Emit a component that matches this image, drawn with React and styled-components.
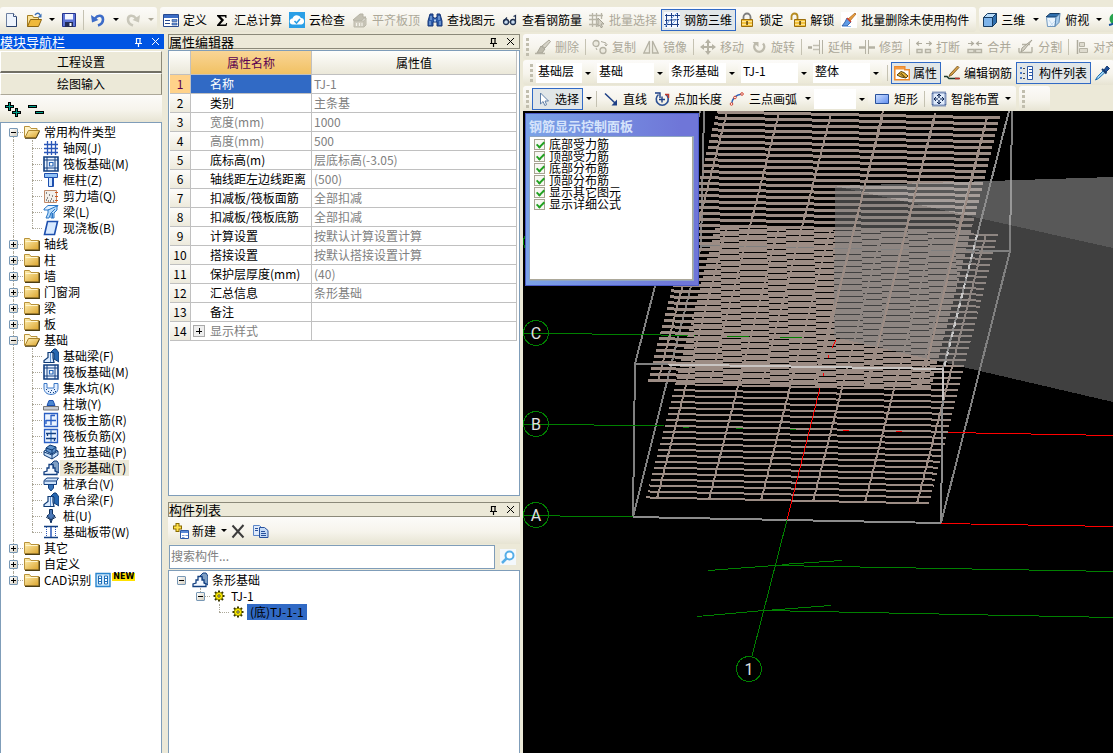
import { useState } from "react";
import styled, { createGlobalStyle, css } from "styled-components";

const GlobalStyle = createGlobalStyle`
  * {
    box-sizing: border-box;
  }
  body {
    margin: 0;
    background: #ece9d8;
  }
  body, button, input, select, table {
    font-family: "Noto Sans CJK SC", "Liberation Sans", sans-serif;
    font-size: 12px;
    line-height: 16px;
    color: #000;
  }
  button {
    margin: 0;
    padding: 0;
    border: 0;
    background: none;
    white-space: nowrap;
  }
`;

const barFill = "linear-gradient(#fcfbf9 0%, #f6f4ec 55%, #e7e4d3 100%)";

const Page = styled.div`
  display: flex;
  flex-direction: column;
  height: 100vh;
  padding-top: 7px;
  overflow: hidden;
`;

const Workspace = styled.main`
  display: flex;
  flex: 1;
  min-height: 0;
  padding-top: 2px;
`;

const Defs = styled.svg`
  position: absolute;
`;

/* ---------- toolbars ---------- */

const BarRow = styled.div`
  display: flex;
  gap: 3px;
  flex: none;
  height: 25px;
  overflow: hidden;
`;

const Bar = styled.div`
  display: flex;
  align-items: center;
  flex: ${({ $fill }) => ($fill ? "1 0 auto" : "none")};
  padding-left: ${({ $start = 4 }) => $start}px;
  padding-right: ${({ $end = 0 }) => $end}px;
  border-radius: 3px;
  background: ${barFill};
`;

const ToolButton = styled.button`
  display: flex;
  align-items: center;
  flex: none;
  gap: ${({ $gap = 4 }) => $gap}px;
  height: 22px;
  padding: 0 3px 0 2px;
  border: 1px solid transparent;
  ${({ $active }) =>
    $active &&
    css`
      border-color: #316ac5;
      background: #e1e6e8;
    `}
  &:disabled {
    color: #aca899;
  }
`;

const ArrowButton = styled.button`
  flex: none;
  width: ${({ $w = 11 }) => $w}px;
  height: 22px;
  &::before {
    content: "";
    display: block;
    width: 0;
    margin: 0 auto;
    border: 3px solid transparent;
    border-top-color: ${({ disabled }) => (disabled ? "#aca899" : "#000")};
    border-bottom: 0;
  }
`;

const Separator = styled.span`
  flex: none;
  width: 1px;
  height: ${({ $h = 16 }) => $h}px;
  margin: 0 3px 0 2px;
  background: #c5c2b2;
`;

const Grip = styled.span`
  flex: none;
  width: 3px;
  height: 18px;
  margin-right: 3px;
  background: repeating-linear-gradient(#c1beae 0 3px, transparent 3px 5px);
`;

const Combo = styled.label`
  display: flex;
  position: relative;
  flex: none;
  width: ${({ $w = 69 }) => $w}px;
  height: 20px;
  margin-right: 3px;
  background: #fff;
  &::after {
    content: "";
    position: absolute;
    right: 3px;
    top: 9px;
    border: 3px solid transparent;
    border-top-color: #000;
    border-bottom: 0;
    pointer-events: none;
  }
  select {
    appearance: none;
    width: 100%;
    padding: 0 12px 3px 2px;
    border: 0;
    border-radius: 0;
    background: linear-gradient(#fbfaf6, #ece9d8) right / 12px 100% no-repeat;
  }
`;

/* ---------- docked panels ---------- */

const NavColumn = styled.aside`
  display: flex;
  flex-direction: column;
  flex: none;
  width: 164px;
  margin-right: 4px;
`;

const DockColumn = styled.section`
  display: flex;
  flex-direction: column;
  gap: 6px;
  flex: none;
  width: 352px;
  margin-right: 3px;
`;

const ViewColumn = styled.section`
  display: flex;
  flex-direction: column;
  flex: 1;
  min-width: 0;
`;

const BarStack = styled.div`
  display: flex;
  flex-direction: column;
  gap: 1px;
  flex: none;
`;

const DockPanel = styled.div`
  display: flex;
  flex-direction: column;
  flex: ${({ $grow }) => $grow} 1 0;
  min-height: 0;
`;

const PanelTitle = styled.header`
  display: flex;
  align-items: center;
  flex: none;
  height: 15px;
  padding-right: 4px;
  font-size: 13px;
  line-height: 13px;
  border: ${({ $blue }) => ($blue ? "0" : "1px solid #8b8979")};
  color: ${({ $blue }) => ($blue ? "#fff" : "#000")};
  background: ${({ $blue }) => ($blue ? "#0054e3" : "#ece9d8")};
  span {
    flex: 1;
  }
  button {
    display: flex;
    margin-left: 8px;
    color: inherit;
  }
`;

const NavButtons = styled.div`
  display: flex;
  flex-direction: column;
  flex: none;
  width: 162px;
  padding-top: 2px;
`;

const NavButton = styled.button`
  height: 22px;
  border: 1px solid #fff;
  border-right-color: #8b8979;
  border-bottom: ${({ $raised }) => ($raised ? "2px solid #716f64" : "1px solid #aca899")};
  background: #ece9d8;
`;

const NavTools = styled.div`
  display: flex;
  align-items: center;
  gap: 7px;
  flex: none;
  width: 162px;
  height: 27px;
  padding-left: 5px;
  background: ${barFill};
`;

const TreeBox = styled.div`
  flex: 1;
  min-height: 0;
  width: ${({ $w = "100%" }) => $w};
  padding: 1px 0 0 3px;
  border: 1px solid #7f9db9;
  border-bottom: 0;
  background: #fff;
  overflow: hidden;
`;

const TreeRow = styled.div`
  display: flex;
  align-items: center;
  height: 16px;
  white-space: nowrap;
  > svg {
    margin: 0 1px;
  }
`;

const Cell = styled.span`
  display: flex;
  align-items: center;
  justify-content: center;
  position: relative;
  flex: none;
  width: 19px;
  height: 16px;
  &::before {
    content: "";
    position: absolute;
    left: 9px;
    top: ${({ $line }) => ($line === "first" ? "8px" : "0")};
    bottom: ${({ $line }) => ($line === "last" ? "8px" : "0")};
    border-left: ${({ $line }) => ($line === "none" ? "0" : "1px dotted #aca899")};
  }
  &::after {
    content: "";
    position: absolute;
    left: 9px;
    right: 0;
    top: 8px;
    border-top: ${({ $stub }) => ($stub ? "1px dotted #aca899" : "0")};
  }
`;

const Expander = styled.button`
  position: relative;
  z-index: 1;
  width: 9px;
  height: 9px;
  border: 1px solid #7898b5;
  border-radius: 1px;
  background:
    linear-gradient(#000, #000) center / 5px 1px no-repeat,
    ${({ $open }) => ($open ? "" : "linear-gradient(#000, #000) center / 1px 5px no-repeat,")}
    linear-gradient(135deg, #fff, #d5cfc0);
`;

const TreeText = styled.span`
  padding: 0 3px;
  color: #000;
  background: ${({ $mark }) => ({ soft: "#ece9d8", strong: "#316ac5" })[$mark] || "none"};
`;

const NewTag = styled.b`
  padding: 0 1px;
  margin-bottom: 6px;
  font-family: "DejaVu Sans", sans-serif;
  font-size: 8px;
  line-height: 8px;
  background: #ffe100;
`;

/* ---------- property editor ---------- */

const TableBox = styled.div`
  flex: 1;
  min-height: 0;
  margin-top: 1px;
  padding: 0 2px 0 1px;
  border: 1px solid #7f9db9;
  background: #fff;
  overflow: hidden;
`;

const PropertyTable = styled.table`
  width: 100%;
  table-layout: fixed;
  border-spacing: 0;
  th, td {
    height: 19px;
    padding: 0;
    border-right: 1px solid #c0c0c0;
    border-bottom: 1px solid #c0c0c0;
    font-weight: normal;
    line-height: 16px;
    white-space: nowrap;
    overflow: hidden;
  }
  thead th {
    height: 24px;
    background: linear-gradient(#fefefc, #ebe8d9);
  }
  thead th:first-child {
    width: 21px;
  }
  thead th:nth-child(2) {
    width: 121px;
    color: #5b0050;
    background: linear-gradient(#f9d596, #f1c163);
  }
  tbody th {
    background: linear-gradient(#fdfcfa, #edeadc);
  }
  td:last-child {
    padding-left: 2px;
    color: #808080;
  }
`;

const PropRow = styled.tr`
  td:nth-child(2) {
    color: ${({ $dim }) => ($dim ? "#808080" : "#000")};
  }
  ${({ $current }) =>
    $current &&
    css`
      && th {
        color: #5b0050;
        background: #ffd28a;
      }
      && td:nth-child(2) {
        color: #fff;
        background: #316ac5;
      }
    `}
`;

const NameCell = styled.div`
  display: flex;
  align-items: center;
  height: 18px;
  padding-left: ${({ $plus }) => ($plus ? 2 : 19)}px;
  gap: 5px;
`;

const PlusBox = styled.button`
  width: 12px;
  height: 12px;
  border: 1px solid #aaa;
  background:
    linear-gradient(#000, #000) center / 6px 1px no-repeat,
    linear-gradient(#000, #000) center / 1px 6px no-repeat,
    #eee;
`;

/* ---------- component list ---------- */

const ListTools = styled.div`
  display: flex;
  align-items: center;
  flex: none;
  height: 27px;
  padding-left: 2px;
  background: ${barFill};
`;

const SearchRow = styled.div`
  display: flex;
  flex: none;
  height: 26px;
  padding: 1px 0 1px 1px;
  input {
    flex: 1;
    min-width: 0;
    padding: 0 0 3px 1px;
    border: 1px solid #7f9db9;
    background: #fff;
  }
  input::placeholder {
    color: #808080;
  }
  button {
    display: flex;
    align-items: center;
    justify-content: center;
    width: 25px;
  }
`;

/* ---------- 3d view ---------- */

const Viewport = styled.div`
  position: relative;
  flex: 1;
  min-height: 0;
  background: #000;
  overflow: hidden;
`;

const Scene = styled.svg`
  display: block;
  width: 100%;
  height: 100%;
`;

const FloatPanel = styled.div`
  position: absolute;
  left: 2px;
  top: 2px;
  display: flex;
  flex-direction: column;
  width: 174px;
  height: 173px;
  padding: 2px 4px 4px 3px;
  border: 1px solid #4c5cc8;
  background: linear-gradient(90deg, #7ba3e7, #6f76d8 90%);
  h2 {
    margin: 0;
    height: 20px;
    font-size: 13px;
    line-height: 20px;
    color: #d5e3fb;
  }
`;

const CheckList = styled.div`
  flex: 1;
  padding: 1px 4px;
  border: 1px solid #8fa6c0;
  box-shadow: inset -1px -1px #aca899;
  background: #fff;
`;

const CheckLine = styled.label`
  display: flex;
  align-items: center;
  gap: 4px;
  height: 12px;
  line-height: 12px;
  input {
    appearance: none;
    width: 11px;
    height: 11px;
    margin: 0;
    border: 1px solid #a7a392;
    background: #f7f7f2;
  }
  input:checked::before {
    content: "";
    display: block;
    width: 3px;
    height: 6px;
    margin: 0 0 0 3px;
    border: solid #21a121;
    border-width: 0 2px 2px 0;
    transform: rotate(45deg);
  }
`;

const Glyph = styled.svg`
  display: block;
  flex: none;
`;

/* ---------- icons, all on a 16px grid ---------- */

const icons = {
  page: (
    <>
      <path d="M3.500 1.500h7l3 3v10h-10z" fill="#eef4fd" stroke="#6c7fa0" />
      <path d="M10.500 1.500v3h3" fill="#fff" stroke="#3f5680" />
      <path d="M13.500 5v9.500h-10" fill="none" stroke="#27406e" />
    </>
  ),
  open: (
    <>
      <path d="M1.500 14.500v-11h5l1 2h5v3" fill="#fbe39a" stroke="#a57e22" />
      <path d="M1.500 14.500l3-7h11l-3 7z" fill="#f0b93a" stroke="#8c6510" />
      <path d="M9 3c2-2.500 4-2 5 0" fill="none" stroke="#3a6fb5" strokeWidth="1.500" />
      <path d="M15.500 1.500v4h-4z" fill="#3a6fb5" />
    </>
  ),
  save: (
    <>
      <path d="M1.500 1.500h13v13h-13z" fill="#5d74d6" stroke="#26368e" />
      <path d="M4 2h8v5.500H4z" fill="#f3f6ff" />
      <path d="M4 10h8v5H4z" fill="#222c56" />
      <path d="M8.500 11h2v3h-2z" fill="#fff" />
    </>
  ),
  undo: (
    <>
      <path d="M5 6.500C8 2.500 13 3 13 7.500c0 3-2 5-5 6" fill="none" stroke="#3d6cc8" strokeWidth="2.600" />
      <path d="M1 3l1 7.500L8.500 8z" fill="#3d6cc8" />
    </>
  ),
  redo: (
    <>
      <path d="M11 6.500C8 2.500 3 3 3 7.500c0 3 2 5 5 6" fill="none" stroke="#c9c7ba" strokeWidth="2.600" />
      <path d="M15 3l-1 7.500L7.500 8z" fill="#c9c7ba" />
    </>
  ),
  form: (
    <>
      <path d="M.5 2.500h15v12H.5z" fill="#fff" stroke="#27498f" />
      <path d="M1 3h14v3H1z" fill="#3b6cc4" />
      <path d="M2 8.500h5M2 11.500h5" stroke="#27498f" />
      <path d="M9 7.500h5v2H9zM9 11h5v2H9z" fill="#6b95d8" stroke="#27498f" strokeWidth=".6" />
    </>
  ),
  sigma: (
    <path d="M3 3h9.500v3h-1L11 4.500H6.500l3.600 3.600-4 4.400H11.500l.8-1.500h.9L12.500 14H3v-1l4-4.700L3 4z" fill="#000" />
  ),
  cloud: (
    <>
      <path d="M0 0h16v16H0z" fill="#2b9fe6" />
      <path d="M4 12.500a3 3 0 01-.5-6 4.500 4.500 0 018.500-.5 3.300 3.300 0 01.5 6.500z" fill="#fff" />
      <path d="M5.500 9l2 2 3.500-4" fill="none" stroke="#2b9fe6" strokeWidth="1.600" />
    </>
  ),
  level: (
    <>
      <path d="M1 8l7-6h3v3h3L9 9H3z" fill="#c3c0b2" stroke="#b5b2a4" />
      <path d="M2 9h10v6H2zM12 9l2-3v7l-2 2" fill="#d0cdc0" stroke="#bbb8aa" />
      <path d="M4.500 11v3M7.500 11v3M10 11v3" stroke="#f4f2ea" />
    </>
  ),
  binoculars: (
    <>
      <path d="M3 2h3v3l1 1h2l1-1V2h3l2 7v5h-5v-4H6v4H1V9z" fill="#2c5aa8" stroke="#173676" />
      <path d="M4 4v4M3 9v4M12 4v4M13 9v4" stroke="#9fc4ef" />
      <path d="M7 7.500h2v2H7z" fill="#b9d1f0" />
    </>
  ),
  glasses: (
    <>
      <circle cx="4" cy="10" r="2.500" fill="#c8dcf0" stroke="#1f3050" strokeWidth="1.300" />
      <circle cx="11" cy="10" r="2.500" fill="#c8dcf0" stroke="#1f3050" strokeWidth="1.300" />
      <path d="M6.500 10h2M1.500 9.500L5 5.500M13.500 10V3.500l-2 1" fill="none" stroke="#1f3050" strokeWidth="1.200" />
    </>
  ),
  gridPick: (
    <>
      <path d="M0 3.500h14M0 7.500h9M0 12.500h9M3.500 1v14M7.500 1v14M12.500 1v6" stroke="#b8b5a7" strokeWidth="1.300" />
      <path d="M9 6l6 6h-3l1.500 3-1.500.7L10.500 13 9 14.500z" fill="#d5d2c6" stroke="#a5a294" />
    </>
  ),
  rebar3d: (
    <>
      <path d="M0 0h16v16H0z" fill="#f4f8ff" />
      <path d="M2.500 2v13M7.500 1v14M13.500 1v14M0 12.500h15M1 8.500l14-1M1 3.500h15" stroke="#1d3f86" fill="none" />
      <path d="M1 15L5 9l8-8M8 12l6-6" stroke="#77a5e6" fill="none" />
    </>
  ),
  lock: (
    <>
      <path d="M4.500 7V5a3.500 3.500 0 017 0v2" fill="none" stroke="#7d7d7d" strokeWidth="1.800" />
      <path d="M2.500 7.500h11v7h-11z" fill="#f2c23c" stroke="#9b6e0c" />
      <path d="M3 9.500h10M3 12.500h10" stroke="#fbe39a" />
      <path d="M7.300 9h1.500v4H7.300z" fill="#5b4108" />
    </>
  ),
  unlock: (
    <>
      <path d="M1.500 8V4.500a3 3 0 016 0V7" fill="none" stroke="#b58b20" strokeWidth="1.800" />
      <path d="M4.500 7.500h11v7h-11z" fill="#f2c23c" stroke="#9b6e0c" />
      <path d="M5 9.500h10M5 12.500h10" stroke="#fbe39a" />
      <path d="M9.300 9h1.500v4H9.300z" fill="#5b4108" />
    </>
  ),
  brush: (
    <>
      <path d="M0 0h16v16H0z" fill="#fff" />
      <path d="M14 1l1 1-6 7-2-2z" fill="#e9a03c" stroke="#a35a14" strokeWidth=".7" />
      <path d="M6 6l4 4-4 4H1l3-4z" fill="#5f9ce6" stroke="#214f9c" strokeWidth=".8" />
      <path d="M6 6l4 4" stroke="#cf3c2e" strokeWidth="1.500" />
      <path d="M2 14.500h8" stroke="#93b9ea" />
    </>
  ),
  cube: (
    <>
      <path d="M1.500 5.500h9v9h-9z" fill="#7eb4ea" stroke="#173c63" />
      <path d="M1.500 5.500l4-4h9l-4 4z" fill="#b7dbf8" stroke="#173c63" />
      <path d="M10.500 5.500l4-4v9l-4 4z" fill="#2f6fae" stroke="#173c63" />
    </>
  ),
  topView: (
    <>
      <path d="M1 5l4-3.500h10L11 5z" fill="#2f6fae" stroke="#173c63" />
      <path d="M1.500 5.500h9.500l-1 9H2.500z" fill="#eaf4fd" stroke="#7299bf" />
      <path d="M11 5.500l4-4-1 9-4 4z" fill="#a9cdee" stroke="#5b86b0" />
      <path d="M4 8l4 6M5 14l5-5" stroke="#c4dcf2" />
    </>
  ),
  orbit: (
    <>
      <circle cx="8" cy="7" r="5.500" fill="#27a34d" />
      <path d="M2 13c5-1 9-5 11-10" fill="none" stroke="#134f9b" strokeWidth="2" />
    </>
  ),
  erase: (
    <>
      <path d="M14 1l1.500 1.500L10 9 7 7z" fill="#d6d3c7" stroke="#aaa799" />
      <path d="M6 7l4 3-3 4H2z" fill="#bebbad" stroke="#a5a294" />
      <path d="M0 14.500h10" stroke="#b5b2a4" strokeWidth="1.500" />
    </>
  ),
  copyItem: (
    <>
      <circle cx="4" cy="4.500" r="3" fill="#eceadf" stroke="#b5b2a4" strokeWidth="1.300" />
      <circle cx="11" cy="11.500" r="3" fill="#eceadf" stroke="#b5b2a4" strokeWidth="1.300" />
      <path d="M9 2.500l5 1.500v3M12.500 5.500L14 7l1.500-1.500M4 9l1 2" fill="none" stroke="#aeab9d" />
    </>
  ),
  mirror: <path d="M6.500 2v12H.8zM9.500 2v12h5.700z" fill="#eceadf" stroke="#b5b2a4" strokeWidth="1.300" />,
  move: (
    <>
      <path d="M8 2v12M2 8h12" stroke="#b5b2a4" strokeWidth="2" />
      <path d="M8 0l3 4H5zM8 16l3-4H5zM0 8l4-3v6zM16 8l-4-3v6z" fill="#b5b2a4" />
    </>
  ),
  rotate: (
    <>
      <path d="M12 4.500a5 5 0 11-7.500 0" fill="none" stroke="#bdbaac" strokeWidth="2.400" />
      <path d="M1.500 3h6v5z" fill="#bdbaac" />
    </>
  ),
  extend: (
    <>
      <path d="M11.500 1v14M14.500 1v14" stroke="#b5b2a4" />
      <path d="M0 8.500h4" stroke="#aeab9d" strokeWidth="2.500" />
      <path d="M5 6.500h6M5 10.500h6" stroke="#c3c0b3" strokeWidth="1.500" />
    </>
  ),
  trim: (
    <>
      <path d="M6.500 1v14M9.500 1v14" stroke="#b5b2a4" />
      <path d="M0 8.500h6M10 8.500h6" stroke="#b5b2a4" strokeWidth="2.500" />
    </>
  ),
  split: (
    <>
      <path d="M1 4.500h5M10 4.500h5M3 2.500l-2.500 2L3 6.500M13 2.500l2.500 2-2.500 2" fill="none" stroke="#aeab9d" strokeWidth="1.200" />
      <path d="M1 10.500h5v3H1zM9.500 10.500h5v3h-5z" fill="#eceadf" stroke="#b5b2a4" strokeWidth="1.400" />
    </>
  ),
  merge: (
    <>
      <path d="M1 4.500h5M10 4.500h5M4 2.500l2.500 2L4 6.500M12 2.500l-2.500 2 2.500 2" fill="none" stroke="#aeab9d" strokeWidth="1.200" />
      <path d="M1 10.500h6v3H1zM8.500 10.500h6v3h-6z" fill="#eceadf" stroke="#b5b2a4" strokeWidth="1.400" />
    </>
  ),
  divide: (
    <>
      <path d="M4 5.500h8M1 13.500h13M1 9v4.500M14 8v5.500" fill="none" stroke="#b5b2a4" strokeWidth="1.400" />
      <path d="M14 1l-8 10-3 2 1-4z" stroke="#a5a294" fill="#d6d3c7" />
    </>
  ),
  align: (
    <>
      <path d="M2.500 1v14" stroke="#aeab9d" strokeWidth="1.500" />
      <path d="M4.500 3.500h5v4h-5zM4.500 9.500h8v4h-8z" fill="#dedbcf" stroke="#b5b2a4" />
    </>
  ),
  attr: (
    <>
      <path d="M.8 1.800h10v3h4.500v10H.8z" fill="#fff" stroke="#ee8a2c" strokeWidth="1.500" />
      <path d="M1 2h9v2.500H1z" fill="#f39a43" />
      <path d="M3 10l4-3.500 3 1 4 3.500-2 2-5-1z" fill="#e6b437" stroke="#59430d" />
      <path d="M7 8l5 5M5 8l5 4" stroke="#59430d" strokeWidth=".8" />
    </>
  ),
  editBar: (
    <>
      <path d="M13.500 1l1.500 1.500L8 10l-3 1.500L6 9z" fill="#d9a24a" stroke="#6c4a14" strokeWidth=".8" />
      <path d="M0 11.500h3l2 2h10" fill="none" stroke="#1c3b2c" strokeWidth="1.600" />
      <path d="M11 13.500h5" stroke="#b8342c" strokeWidth="1.600" />
    </>
  ),
  listView: (
    <>
      <path d="M1 2h2v2H1zM1 7h2v2H1zM1 12h2v2H1z" fill="#4878c6" />
      <path d="M4 3.500h2M4 8.500h2M4 13.500h2" stroke="#4b4b4b" />
      <path d="M8.500 1.500h5v13h-5z" fill="#fff" stroke="#2c58a6" />
      <path d="M10 4.500h3M10 7.500h3M10 10.500h3" stroke="#2c58a6" />
    </>
  ),
  dropper: (
    <>
      <path d="M10 5L3.500 11.500 1.500 15l3-1.500L11.500 7" fill="#9fd3f2" stroke="#1f6fb0" />
      <path d="M8 4l4.500 4.500" stroke="#15396e" strokeWidth="2" />
      <path d="M10 5l3-4 2.500 2.500L12 7z" fill="#1d4f9a" stroke="#15396e" />
    </>
  ),
  pointer: <path d="M5.500 2v11l2.600-2.500 1.700 4 1.800-.8L10 10h3.500z" fill="#fff" stroke="#5f7fa8" />,
  line: (
    <>
      <path d="M2 2.500L12 12" stroke="#1d3f86" strokeWidth="1.500" />
      <path d="M14 14.500H8.500l5.500-6z" fill="#1d3f86" />
    </>
  ),
  length: (
    <>
      <path d="M4.500 3.500a6 6 0 107.500 0" fill="none" stroke="#2b5094" strokeWidth="1.600" />
      <path d="M1 2h5v5M8 5.500v6M5 8.500h6" fill="none" stroke="#1d3f86" strokeWidth="1.400" />
      <path d="M11 3.500h3.500V7" fill="none" stroke="#c2382c" strokeWidth="1.500" />
    </>
  ),
  arc: (
    <>
      <path d="M2.500 13.500C3 8 6 4 13 3" fill="none" stroke="#2b5fb4" strokeWidth="1.500" />
      <circle cx="2.500" cy="13" r="1.300" fill="#fff" stroke="#d3422e" />
      <circle cx="6" cy="6.500" r="1.300" fill="#fff" stroke="#d3422e" />
      <circle cx="13" cy="3" r="1.300" fill="#fff" stroke="#d3422e" />
    </>
  ),
  rect: <path d="M1.500 3.500h13v9h-13z" fill="url(#rectFill)" stroke="#27509c" />,
  smart: (
    <>
      <path d="M1.500 1.500h13v13h-13z" fill="#dfeafa" stroke="#1d3f86" strokeDasharray="1 1" strokeWidth="2" />
      <path d="M8 3v4M8 9v4M3 8h4M9 8h4" stroke="#0d2454" strokeWidth="1.200" />
      <path d="M6 5l2-2 2 2M6 11l2 2 2-2M5 6L3 8l2 2M11 6l2 2-2 2" fill="none" stroke="#0d2454" />
    </>
  ),
  folder: (
    <>
      <path d="M.5 13.500v-11h5l1.500 2h8v9z" fill="url(#folderFill)" stroke="#b8923a" />
      <path d="M1.500 5.500h12" stroke="#fff6cf" />
      <path d="M1 14.300h14.300V5" fill="none" stroke="#4b3d14" strokeWidth="1.300" />
    </>
  ),
  folderOpen: (
    <>
      <path d="M.5 13.500v-11h5l1.500 2h6v3" fill="#fff3c8" stroke="#b8923a" />
      <path d="M1 13.500l3.500-7h11l-3.500 7z" fill="url(#folderFill)" stroke="#a9822c" />
      <path d="M1 14.300h11l3.500-7" fill="none" stroke="#4b3d14" />
    </>
  ),
  axisGrid: <path d="M4.500 1v14M8.500 1v14M12.500 1v14M1 4.500h14M1 8.500h14M1 12.500h14" stroke="#2a57b8" strokeWidth="1.300" />,
  raft: (
    <>
      <path d="M1 1h14v14H1z" fill="#e9f3ff" stroke="#123f80" strokeWidth="1.600" />
      <path d="M4 1v14M12 1v14M1 4h14M1 12h14" stroke="#123f80" />
      <path d="M6.500 6.500h3.500v3.500h-3.500z" fill="#fff" stroke="#2a68b8" strokeWidth="1.200" />
    </>
  ),
  column: (
    <>
      <path d="M1.500 1.500h13v4h-13z" fill="#8fc0f5" stroke="#1d4fae" />
      <path d="M5.500 5.500h5v9h-5z" fill="#cfe6ff" stroke="#1d4fae" />
      <path d="M9.500 6v8" stroke="#1d4fae" />
    </>
  ),
  wall: (
    <>
      <path d="M1.500 2.500h12v12h-12z" fill="#f2efea" stroke="#c08a6a" />
      <path d="M3 5h1M6 7h1M4 10h1M8 11h1M5 13h1M9 8h1M3 12h1M7 13h1M10 13h1" stroke="#222" />
      <path d="M12 4.500h3M12 8.500h3M12 12.500h3" stroke="#d0591e" />
    </>
  ),
  beam: (
    <>
      <path d="M1 5l4-3.500h10L11 6H1z" fill="#e4f2ff" stroke="#2a77c6" />
      <path d="M5 6l9-4v4l-3 3v5H8V9L6 14H3l2-5z" fill="#b9dcfb" stroke="#2a77c6" />
      <path d="M8 9l4-4M9.500 14V9" stroke="#2a77c6" />
    </>
  ),
  slab: <path d="M4.500 1.500h10l-3 13h-10z" fill="#d7e9ff" stroke="#1d4fae" strokeWidth="1.600" />,
  stripBeam: (
    <>
      <path d="M7 5l4-4h2l3 4v9l-5-3V5z" fill="#2767b0" stroke="#0e3a74" />
      <path d="M1 14.500v-2l4-3V4.500h5V10l1 4.500z" fill="#dcecff" stroke="#0e3a74" strokeWidth="1.200" />
      <path d="M7.500 5v9" stroke="#5b8fd0" />
    </>
  ),
  pit: (
    <>
      <path d="M1 3.500h3V8h7V3.500h4V8c0 4-3 6.500-7 6.500S1 12 1 8z" fill="#e3efff" stroke="#3c78c6" />
      <path d="M3 9.500h1M5 11.500h1M8 10.500h1M11 9.500h1M7 12.500h1M10 12.500h1M12 11.500h1" stroke="#123f80" />
    </>
  ),
  pier: (
    <>
      <path d="M6 4.500h4l2 5H4z" fill="#4a86d0" stroke="#1d4fae" />
      <path d="M.5 10.500h15v3.500H.5z" fill="#c9ccd2" stroke="#777" />
    </>
  ),
  mainBar: (
    <path d="M1.500 1.500h13v13h-13zM8 3.500h4M8 3v10M3 8.500h10M3 8v4" fill="#eaf3ff" stroke="#2a5fc4" strokeWidth="1.300" />
  ),
  negBar: (
    <>
      <path d="M1.500 1.500h13v13h-13z" fill="#eaf3ff" stroke="#2a5fc4" strokeWidth="1.300" />
      <path d="M8 2v12" stroke="#7aa7dd" strokeWidth="2" />
      <path d="M3 5.500h10M3 10.500h10M4.500 5v3M11.500 10v3" stroke="#123f80" strokeWidth="1.300" />
    </>
  ),
  pad: (
    <>
      <path d="M1 7l6-3 8 3v4l-6 4-8-4z" fill="#c8e0f9" stroke="#0e3a74" />
      <path d="M3 4l4-3 6 2v4L9 10 3 7z" fill="#5d90c8" stroke="#0e3a74" />
      <path d="M3 4l6 2 4-3M9 6v4M1 8l8 3 6-4M9 11v4" fill="none" stroke="#0e3a74" />
    </>
  ),
  strip: (
    <>
      <path d="M7 5l4-4h3l2 3v9l-5-3-1-5z" fill="#7f9fc4" stroke="#123f80" />
      <path d="M1 14.500v-2.500l3-1V8h2V4.500h4V8h2v3l2 1v2.500z" fill="#f3f8ff" stroke="#123f80" strokeWidth="1.300" />
    </>
  ),
  pileCap: (
    <>
      <path d="M1 4.500L4 2h11.500L13.500 5v3.500H1z" fill="#cfe3fa" stroke="#123f80" />
      <path d="M1.500 5h12M5.500 8.500h5V12L8 15l-2.500-3z" fill="#3572b8" stroke="#123f80" />
    </>
  ),
  pile: (
    <>
      <path d="M6.500 1.500h3V6l2.500 2-3 2.500V12L8 15l-1-3v-1.500L4 8l2.500-2z" fill="#4a78b8" stroke="#0e2f5e" />
      <path d="M3 9l5 3 5-3" fill="none" stroke="#0e2f5e" />
    </>
  ),
  band: (
    <>
      <path d="M1 2.500h14M1 13.500h14" stroke="#123f80" strokeWidth="1.600" />
      <path d="M3.500 3v10M12.500 3v10" stroke="#2a57b8" strokeDasharray="1 1" />
      <path d="M8 3v10" stroke="#2a57b8" strokeWidth="1.500" />
    </>
  ),
  cad: (
    <>
      <path d="M1 1.500h14v13H1z" fill="#cfe8fb" stroke="#2a86cf" strokeWidth="1.400" />
      <path d="M3.500 4h3v8h-3zM9.500 4h3v8h-3z" fill="#fff" stroke="#1f6fb8" />
      <path d="M3.500 6.500h3M9.500 6.500h3M3.500 9.500h3M9.500 9.500h3" stroke="#1f6fb8" />
    </>
  ),
  gear: (
    <>
      <path d="M8 2.500v11M2.500 8h11M4 4l8 8M12 4l-8 8" stroke="#3b3800" strokeWidth="2" />
      <circle cx="8" cy="8" r="3.700" fill="#ffee00" stroke="#8a8200" />
      <circle cx="8" cy="8" r="1.200" fill="#fff" stroke="#4e4a00" />
    </>
  ),
  addItem: (
    <>
      <path d="M4.500 0v9M0 4.500h9" stroke="#8a6b00" strokeWidth="4" />
      <path d="M4.500 1v7M1 4.500h7" stroke="#ffe14a" strokeWidth="2" />
      <path d="M7.500 7.500h8v8h-8z" fill="#fff" stroke="#2c58a6" />
      <path d="M8 8h7v2H8z" fill="#5a8ad6" />
      <path d="M9 12.500h2.500M12.500 12.500H15M9 14.500h2.500" stroke="#7a9fd8" />
    </>
  ),
  remove: <path d="M2.500 2.500l11 12M13.500 2L2.500 14.500" stroke="#3c3c3c" strokeWidth="2" />,
  duplicate: (
    <>
      <path d="M.5 2.500h6l3 3v7h-9z" fill="#dfeafa" stroke="#5c86c8" />
      <path d="M6.500 4.500h5l3.500 3v7H6.500z" fill="#c5dbf7" stroke="#27509c" />
      <path d="M8 8.500h4M8 10.500h5M8 12.500h5M2 5.500h3M2 7.500h3" stroke="#27509c" />
    </>
  ),
  search: (
    <>
      <path d="M0 0h16v16H0z" fill="#f4f8fc" />
      <circle cx="9.500" cy="6.500" r="4" fill="#fff" stroke="#56aee8" strokeWidth="2" />
      <path d="M6.500 9.500L2 14" stroke="#56aee8" strokeWidth="2.500" />
    </>
  ),
};

const Icon = ({ name }) => (
  <Glyph width="16" height="16" viewBox="0 0 16 16" aria-hidden="true">
    {icons[name]}
  </Glyph>
);

const Pin = () => (
  <Glyph width="9" height="10" viewBox="0 0 9 10" aria-hidden="true">
    <path d="M2.500 1v5M1 6.500h7M6 1v5M4.500 7v3M2 1.500h5" stroke="currentColor" strokeWidth="1.200" />
  </Glyph>
);

const Cross = () => (
  <Glyph width="9" height="9" viewBox="0 0 9 9" aria-hidden="true">
    <path d="M1 1l7 7M8 1L1 8" stroke="currentColor" />
  </Glyph>
);

/* ---------- small pieces ---------- */

const Tool = ({ icon, label, text, ...rest }) => (
  <ToolButton type="button" aria-label={label} {...rest}>
    <Icon name={icon} />
    {text}
  </ToolButton>
);

const Arrow = ({ label, w, disabled }) => (
  <ArrowButton type="button" aria-label={label} $w={w} disabled={disabled} />
);

const Picker = ({ label, value, w }) => (
  <Combo $w={w}>
    <select aria-label={label} defaultValue={value}>
      <option>{value}</option>
    </select>
  </Combo>
);

const Title = ({ text, blue }) => (
  <PanelTitle $blue={blue}>
    <span>{text}</span>
    <button type="button" aria-label="固定">
      <Pin />
    </button>
    <button type="button" aria-label="关闭">
      <Cross />
    </button>
  </PanelTitle>
);

const navTree = [
  {
    text: "常用构件类型",
    children: [
      ["axisGrid", "轴网(J)"],
      ["raft", "筏板基础(M)"],
      ["column", "框柱(Z)"],
      ["wall", "剪力墙(Q)"],
      ["beam", "梁(L)"],
      ["slab", "现浇板(B)"],
    ],
  },
  { text: "轴线" },
  { text: "柱" },
  { text: "墙" },
  { text: "门窗洞" },
  { text: "梁" },
  { text: "板" },
  {
    text: "基础",
    children: [
      ["stripBeam", "基础梁(F)"],
      ["raft", "筏板基础(M)"],
      ["pit", "集水坑(K)"],
      ["pier", "柱墩(Y)"],
      ["mainBar", "筏板主筋(R)"],
      ["negBar", "筏板负筋(X)"],
      ["pad", "独立基础(P)"],
      ["strip", "条形基础(T)"],
      ["pileCap", "桩承台(V)"],
      ["stripBeam", "承台梁(F)"],
      ["pile", "桩(U)"],
      ["band", "基础板带(W)"],
    ],
  },
  { text: "其它" },
  { text: "自定义" },
  { text: "CAD识别", isNew: true },
];

const properties = [
  ["名称", "TJ-1"],
  ["类别", "主条基"],
  ["宽度(mm)", "1000", true],
  ["高度(mm)", "500", true],
  ["底标高(m)", "层底标高(-3.05)"],
  ["轴线距左边线距离", "(500)"],
  ["扣减板/筏板面筋", "全部扣减"],
  ["扣减板/筏板底筋", "全部扣减"],
  ["计算设置", "按默认计算设置计算"],
  ["搭接设置", "按默认搭接设置计算"],
  ["保护层厚度(mm)", "(40)"],
  ["汇总信息", "条形基础"],
  ["备注", ""],
  ["显示样式", "", true],
];

const rebarLayers = ["底部受力筋", "顶部受力筋", "底部分布筋", "顶部分布筋", "显示其它图元", "显示详细公式"];

const NavTree = () => (
  <TreeBox $w="162px">
    {navTree.map((group, i) => {
      const last = i === navTree.length - 1;
      return (
        <div key={group.text}>
          <TreeRow>
            <Cell $stub $line={i === 0 ? "first" : last ? "last" : "full"}>
              <Expander type="button" $open={!!group.children} aria-label={group.text} />
            </Cell>
            <Icon name={group.children ? "folderOpen" : "folder"} />
            <TreeText>{group.text}</TreeText>
            {group.isNew && <Icon name="cad" />}
            {group.isNew && <NewTag>NEW</NewTag>}
          </TreeRow>
          {group.children?.map(([icon, text], n) => (
            <TreeRow key={text}>
              <Cell $line="full" />
              <Cell $stub $line={n === group.children.length - 1 ? "last" : "full"} />
              <Icon name={icon} />
              <TreeText $mark={text === "条形基础(T)" ? "soft" : undefined}>{text}</TreeText>
            </TreeRow>
          ))}
        </div>
      );
    })}
  </TreeBox>
);

const PropertyEditor = () => (
  <DockPanel $grow={462}>
    <Title text="属性编辑器" />
    <TableBox>
      <PropertyTable>
        <thead>
          <tr>
            <th />
            <th>属性名称</th>
            <th>属性值</th>
          </tr>
        </thead>
        <tbody>
          {properties.map(([name, value, dim], i) => (
            <PropRow key={name} $dim={dim} $current={i === 0}>
              <th>{i + 1}</th>
              <td>
                <NameCell $plus={name === "显示样式"}>
                  {name === "显示样式" && <PlusBox type="button" aria-label="展开" />}
                  {name}
                </NameCell>
              </td>
              <td>{value}</td>
            </PropRow>
          ))}
        </tbody>
      </PropertyTable>
    </TableBox>
  </DockPanel>
);

const ComponentList = () => (
  <DockPanel $grow={251}>
    <Title text="构件列表" />
    <ListTools>
      <Tool icon="addItem" text="新建" $gap={3} />
      <Arrow label="新建选项" w={7} />
      <Tool icon="remove" label="删除构件" />
      <Tool icon="duplicate" label="复制构件" />
    </ListTools>
    <SearchRow>
      <input type="text" aria-label="搜索构件" placeholder="搜索构件..." />
      <button type="button" aria-label="搜索">
        <Icon name="search" />
      </button>
    </SearchRow>
    <TreeBox>
      <TreeRow>
        <Cell $line="none">
          <Expander type="button" $open aria-label="条形基础" />
        </Cell>
        <Icon name="strip" />
        <TreeText>条形基础</TreeText>
      </TreeRow>
      <TreeRow>
        <Cell $line="none" />
        <Cell $line="last" $stub>
          <Expander type="button" $open aria-label="TJ-1" />
        </Cell>
        <Icon name="gear" />
        <TreeText>TJ-1</TreeText>
      </TreeRow>
      <TreeRow>
        <Cell $line="none" />
        <Cell $line="none" />
        <Cell $line="last" $stub />
        <Icon name="gear" />
        <TreeText $mark="strong">(底)TJ-1-1</TreeText>
      </TreeRow>
    </TreeBox>
  </DockPanel>
);

/* ---------- scene ---------- */

const barColor = "#9c8c84";
const lean = 0.256;
const pitch = 5.965;

// one layer of rebar: close cross bars plus six long bars, leaning with the view
const Mesh = ({ x, y, rows, thick, first }) => {
  const depth = (rows - 1) * pitch;
  return (
    <g stroke={barColor}>
      {Array.from({ length: rows }, (_, k) => {
        const left = x - lean * pitch * k;
        const top = y + pitch * k;
        return <line key={k} x1={left} y1={top} x2={left + 283} y2={top + 6} strokeWidth={thick} />;
      })}
      {Array.from({ length: 6 }, (_, k) => {
        const left = x + first + 52 * k;
        return <line key={k} x1={left} y1={y + k} x2={left - lean * depth} y2={y + k + depth} strokeWidth="2" />;
      })}
    </g>
  );
};

const axes = [
  { label: "D", x: 536, y: 242 },
  { label: "C", x: 536, y: 333 },
  { label: "B", x: 536, y: 424 },
  { label: "A", x: 536, y: 515 },
  { label: "1", x: 749, y: 669 },
];

const RebarScene = () => (
  <Scene role="img" aria-label="钢筋三维">
    <g transform="translate(-523 -111)" shapeRendering="crispEdges" fill="none">
      <g stroke="#808080" strokeWidth="2">
        <path d="M704 111L701 246L1010 251L1012 111" />
        <path d="M635 364L700 111M633 517L701 246M635 364L633 517" />
        <path d="M941 523L1010 251" />
      </g>
      <path d="M523 333L695 335.500M523 424L664 426M523 515.500L633 517" stroke="#008000" />
      <Mesh x={715} y={229} rows={46} thick={2} first={11} />
      <Mesh x={717} y={112} rows={46} thick={3} first={10} />
      <path d="M835 186L1113 177L1400 168V312L1113 248z" fill="#b0b0b0" fillOpacity=".5" />
      <path d="M835 186L1113 248L1400 312V468L1113 402L834 337z" fill="#808080" fillOpacity=".5" />
      {/* bars nearer than the grey plane */}
      <g stroke={barColor} strokeWidth="2">
        <path d="M883 111L816 386M935 113L868 386M987 118L921 386" />
      </g>
      <path d="M633 517L941 523L943 369L1009 111" stroke="#8c8c8c" strokeWidth="2" />
      <path d="M635 364L700 365" stroke="#808080" strokeWidth="2" />
      <path d="M668 364.500L943 369V400" stroke="#c9c5c3" strokeWidth="2" />
      <path d="M977 235L944 368" stroke="#c9c9c9" strokeWidth="2" strokeDasharray="5 5" />
      <path
        d="M727 336.500H749M780 337.500H802M683 427.500H689M736 428.500H743M790 429.500H796"
        stroke="#008000"
      />
      <path
        d="M836 340L832 348M829 355L828 358M824 373L823 376M820 388L787 520M843 430.500H849M896 431.500H902M948 432.500L1113 435.500L1400 440M941 523.500L1113 526.500L1400 532"
        stroke="#ff0000"
      />
      <g stroke="#008000">
        <path d="M787 520L752 656" />
        <path d="M708 570.500L775 565.500L1113 571.500L1400 577M782 564.500L842 560.500" />
        <path d="M697 616.500L764 610.500L1113 617.500L1400 623M766 610.500L831 605.500" />
        {axes.map(({ label, x, y }) => (
          <circle key={label} cx={x} cy={y} r="12.500" />
        ))}
      </g>
    </g>
    <g transform="translate(-523 -111)" fill="#e0e0e0" fontFamily="Roboto, sans-serif" fontSize="16" textAnchor="middle">
      {axes.slice(1).map(({ label, x, y }) => (
        <text key={label} x={x} y={y + 6}>
          {label}
        </text>
      ))}
    </g>
  </Scene>
);

const RebarPanel = () => {
  const [shown, setShown] = useState(rebarLayers);

  const toggle = (name) =>
    setShown(shown.includes(name) ? shown.filter((n) => n !== name) : [...shown, name]);

  return (
    <FloatPanel>
      <h2>钢筋显示控制面板</h2>
      <CheckList>
        {rebarLayers.map((name) => (
          <CheckLine key={name}>
            <input type="checkbox" checked={shown.includes(name)} onChange={() => toggle(name)} />
            {name}
          </CheckLine>
        ))}
      </CheckList>
    </FloatPanel>
  );
};

const TopToolbar = () => (
  <BarRow>
    <Bar $start={0}>
      <Tool icon="page" label="新建工程" />
      <Tool icon="open" label="打开" />
      <Arrow label="最近工程" w={12} />
      <Tool icon="save" label="保存" />
      <Separator $h={20} />
      <Tool icon="undo" label="撤销" />
      <Arrow label="撤销列表" w={12} />
      <Tool icon="redo" label="恢复" disabled />
      <Arrow label="恢复列表" w={12} disabled />
    </Bar>
    <Bar $start={0} $end={3}>
      <Tool icon="form" text="定义" />
      <Tool icon="sigma" text="汇总计算" />
      <Tool icon="cloud" text="云检查" />
      <Tool icon="level" text="平齐板顶" disabled />
      <Tool icon="binoculars" text="查找图元" />
      <Tool icon="glasses" text="查看钢筋量" />
      <Tool icon="gridPick" text="批量选择" disabled />
      <Tool icon="rebar3d" text="钢筋三维" $active />
      <Tool icon="lock" text="锁定" />
      <Tool icon="unlock" text="解锁" />
      <Tool icon="brush" text="批量删除未使用构件" />
    </Bar>
    <Bar $start={0} $fill>
      <Tool icon="cube" text="三维" $gap={3} />
      <Arrow label="三维选项" w={13} />
      <Tool icon="topView" text="俯视" />
      <Arrow label="俯视选项" w={11} />
      <Tool icon="orbit" label="动态观察" />
    </Bar>
  </BarRow>
);

const EditToolbar = () => (
  <BarRow>
    <Bar $start={3} $fill>
      <Grip />
      <Tool icon="erase" text="删除" disabled />
      <Separator />
      <Tool icon="copyItem" text="复制" disabled />
      <Tool icon="mirror" text="镜像" disabled />
      <Separator />
      <Tool icon="move" text="移动" disabled />
      <Tool icon="rotate" text="旋转" disabled />
      <Separator />
      <Tool icon="extend" text="延伸" disabled />
      <Tool icon="trim" text="修剪" disabled />
      <Separator />
      <Tool icon="split" text="打断" disabled />
      <Tool icon="merge" text="合并" disabled />
      <Tool icon="divide" text="分割" disabled />
      <Separator />
      <Tool icon="align" text="对齐" $gap={2} disabled />
    </Bar>
  </BarRow>
);

const ComponentToolbar = () => (
  <BarRow>
    <Bar $start={7} $fill>
      <Grip />
      <Picker label="楼层" value="基础层" w={58} />
      <Picker label="构件分类" value="基础" />
      <Picker label="构件类型" value="条形基础" />
      <Picker label="构件" value="TJ-1" />
      <Picker label="单元" value="整体" />
      <Separator />
      <Tool icon="attr" text="属性" $gap={3} $active />
      <Tool icon="editBar" text="编辑钢筋" />
      <Tool icon="listView" text="构件列表" $active />
      <Tool icon="dropper" label="拾取构件" />
    </Bar>
  </BarRow>
);

const DrawToolbar = () => (
  <BarRow>
    <Bar $start={3} $end={4}>
      <Grip />
      <Tool icon="pointer" text="选择" $active />
      <Arrow label="选择方式" w={11} />
      <Separator />
      <Tool icon="line" text="直线" />
      <Tool icon="length" text="点加长度" />
      <Tool icon="arc" text="三点画弧" />
      <Arrow label="画弧方式" w={13} />
      <Picker label="半径" value="" w={54} />
      <Tool icon="rect" text="矩形" />
      <Separator />
      <Tool icon="smart" text="智能布置" />
      <Arrow label="布置方式" w={9} />
    </Bar>
    <Bar $start={3} $end={22}>
      <Grip />
    </Bar>
  </BarRow>
);

const App = () => {
  return (
    <Page>
      <GlobalStyle />
      <Defs width="0" height="0" aria-hidden="true">
        <linearGradient id="rectFill" x2="1" y2="1">
          <stop stopColor="#cfe0ff" />
          <stop offset="1" stopColor="#5f8df0" />
        </linearGradient>
        <linearGradient id="folderFill" x2="1" y2="1">
          <stop stopColor="#fff0b4" />
          <stop offset="1" stopColor="#dba42c" />
        </linearGradient>
      </Defs>
      <TopToolbar />
      <Workspace>
        <NavColumn>
          <Title text="模块导航栏" blue />
          <NavButtons>
            <NavButton type="button" $raised>
              工程设置
            </NavButton>
            <NavButton type="button">绘图输入</NavButton>
          </NavButtons>
          <NavTools>
            <button type="button" aria-label="全部展开">
              <Glyph width="16" height="16" viewBox="0 0 16 16">
                <path d="M4.500 1v9M0 5.500h9M11.500 7v9M7 11.500h9" stroke="#000" strokeWidth="3" />
                <path d="M4.500 2v7M1 5.500h7M11.500 8v7M8 11.500h7" stroke="#00a08a" />
              </Glyph>
            </button>
            <button type="button" aria-label="全部折叠">
              <Glyph width="16" height="16" viewBox="0 0 16 16">
                <path d="M0 5.500h9M7 11.500h9" stroke="#000" strokeWidth="3" />
                <path d="M1 5.500h7M8 11.500h7" stroke="#00a08a" />
              </Glyph>
            </button>
          </NavTools>
          <NavTree />
        </NavColumn>
        <DockColumn>
          <PropertyEditor />
          <ComponentList />
        </DockColumn>
        <ViewColumn>
          <BarStack>
            <EditToolbar />
            <ComponentToolbar />
            <DrawToolbar />
          </BarStack>
          <Viewport>
            <RebarScene />
            <RebarPanel />
          </Viewport>
        </ViewColumn>
      </Workspace>
    </Page>
  );
};

export default App;
